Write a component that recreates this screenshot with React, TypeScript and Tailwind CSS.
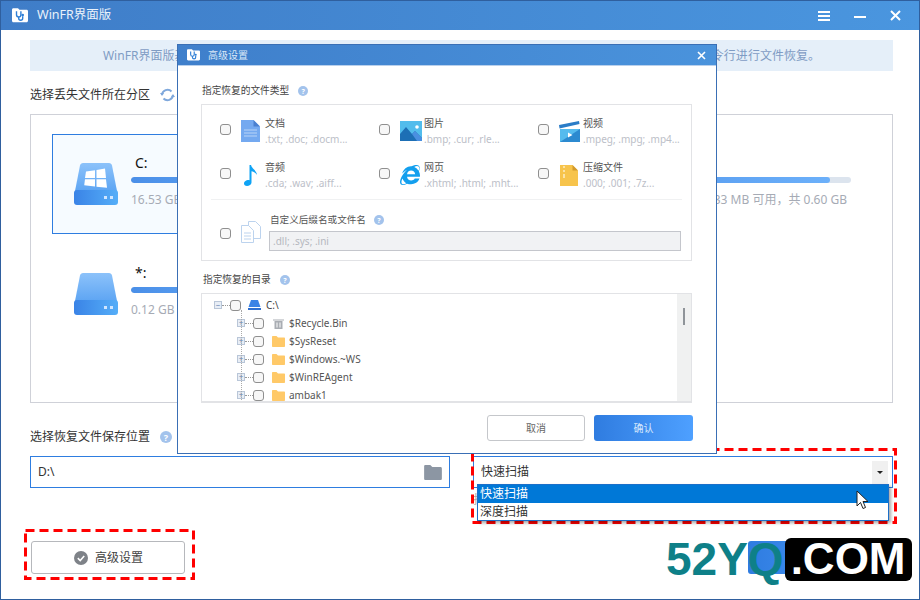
import type { ReactNode } from "react";
import { FaInternetExplorer } from "react-icons/fa";

const FONT = "font-['Noto_Sans','Noto_Sans_CJK_SC',sans-serif]";

function AppLogo({ size = 16 }: { size?: number }) {
  return (
    <svg width={size} height={size * 0.9} viewBox="0 0 16 14">
      <path d="M0 1.500C0 .7.6 0 1.400 0H6l1.500 1.500h7c.8 0 1.500.6 1.500 1.400v9.600c0 .8-.7 1.500-1.500 1.500H1.400C.6 14 0 13.300 0 12.500Z" fill="#fff" />
      <path d="M4.500 3v3.500a2.200 2.200 0 0 0 4.400 0V3M6.700 8.700v1.300a2 2 0 0 0 4 0V8" fill="none" stroke="#2f7fd6" strokeWidth="1.400" />
      <circle cx="10.700" cy="6.800" r="1.300" fill="#2f7fd6" />
    </svg>
  );
}

function Help({ size = 12 }: { size?: number }) {
  return (
    <span
      style={{ width: size, height: size, fontSize: size - 3 }}
      className="flex shrink-0 items-center justify-center rounded-full bg-[#a3c3ec] font-bold leading-none text-white"
    >
      ?
    </span>
  );
}

function Box({ className = "" }: { className?: string }) {
  return <span className={`block shrink-0 rounded-[3px] border border-[#8f8f8f] bg-[#f7f7f7] ${className}`} />;
}

function DiskIcon({ id, windows }: { id: string; windows?: boolean }) {
  return (
    <svg width="44" height="42" viewBox="0 0 44 42" className="shrink-0">
      <defs>
        <linearGradient id={`${id}a`} x1="0" y1="0" x2="0" y2="1">
          <stop offset="0" stopColor="#8cc2fa" />
          <stop offset="1" stopColor="#5ea5f3" />
        </linearGradient>
        <linearGradient id={`${id}b`} x1="0" y1="0" x2="1" y2="0">
          <stop offset="0" stopColor="#3a83e6" />
          <stop offset="1" stopColor="#55aef8" />
        </linearGradient>
      </defs>
      <path d="M6 2.500C6.300 1 7.500 0 9 0h26c1.500 0 2.700 1 3 2.500L43 28H1Z" fill={`url(#${id}a)`} />
      <rect x="0" y="27" width="44" height="15" rx="3" fill={`url(#${id}b)`} />
      <rect x="30" y="33" width="3" height="3" fill="#cfe6ff" />
      <rect x="36" y="33" width="3" height="3" fill="#cfe6ff" />
      {windows && (
        <g fill="#fff">
          <path d="M12 8.500 21 7.200V15H11Z" />
          <path d="M22.500 7 31 5.600 32 15H22.500Z" />
          <path d="M11 16.300H21V23.600L10.200 22.300Z" />
          <path d="M22.500 16.300H32L33 24.800 22.500 23.800Z" />
        </g>
      )}
    </svg>
  );
}

function DocIcon() {
  return (
    <svg width="19" height="22" viewBox="0 0 19 22">
      <path d="M0 0h12.500L19 6.500V22H0Z" fill="#74a9f0" />
      <path d="M12.500 0 19 6.500h-6.500Z" fill="#4a80d0" />
      <path d="M3 10h13M3 13h13M3 16h13" stroke="#b9d4f7" strokeWidth="1" />
    </svg>
  );
}

function ImageIcon() {
  return (
    <svg width="22" height="20" viewBox="0 0 22 20">
      <rect width="22" height="20" fill="#52bcec" />
      <path d="M0 20V13L6 6l6 7 3-3 7 7v3Z" fill="#1d6fb5" />
      <path d="M12 13l3-3 7 7v3h-5Z" fill="#4a8fe0" />
      <circle cx="17" cy="6" r="1.800" fill="#fff" />
    </svg>
  );
}

function VideoIcon() {
  return (
    <svg width="21" height="21" viewBox="0 0 21 21">
      <path d="M0 4 20 0l.5 3L.5 7.500Z" fill="#2a7cc7" />
      <path d="M1 8h20v13H1Z" fill="#2c8ad0" />
      <path d="M1 8h20L1 21Z" fill="#55bbee" />
      <path d="M9 11.500v5l4.500-2.500Z" fill="#fff" />
    </svg>
  );
}

function MusicIcon() {
  return (
    <svg width="14" height="21" viewBox="0 0 14 21" className="ml-[3px]">
      <path d="M5.500 0h1.600c.3 3.500 5.500 5 5.900 10-1.500-2.500-3.500-3.500-5.500-3.800V17.500c0 2-2.400 3.500-4.500 3.500C1 21 0 20 0 18.500c0-2 2.500-3.500 4.300-3.500.5 0 .9.100 1.200.2Z" fill="#0ea3f5" />
    </svg>
  );
}

function ZipIcon() {
  return (
    <svg width="18" height="21" viewBox="0 0 18 21" className="ml-[1px]">
      <path d="M0 0h12.500L18 5.500V21H0Z" fill="#f7c44c" />
      <path d="M12.500 0 18 5.500h-5.500Z" fill="#d29a2c" />
      <path d="M3 1h2v2H3ZM3 5h2v2H3ZM3 9h2v2H3ZM3 13h2v-2H3Z" fill="#fbe3a6" />
    </svg>
  );
}

function FilesIcon() {
  return (
    <svg width="20" height="22" viewBox="0 0 20 22" fill="#fff" stroke="#bcd3ee" strokeWidth="1">
      <path d="M7.500.500h7l5 5V17.500h-12Z" />
      <path d="M.500 4.500h7l5 5v12H.500Z" />
      <path d="M3 12h7M3 15h7M3 18h7" />
    </svg>
  );
}

function FolderIcon({ color = "#ffc968", w = 13, h = 11 }: { color?: string; w?: number; h?: number }) {
  return (
    <svg width={w} height={h} viewBox="0 0 13 11">
      <path d="M0 1c0-.6.4-1 1-1h3.500L6 1.500h6c.6 0 1 .4 1 1V10c0 .6-.4 1-1 1H1c-.6 0-1-.4-1-1Z" fill={color} />
    </svg>
  );
}

const fileTypes: { name: string; ext: string; icon: ReactNode }[] = [
  { name: "文档", ext: ".txt; .doc; .docm...", icon: <DocIcon /> },
  { name: "图片", ext: ".bmp; .cur; .rle...", icon: <ImageIcon /> },
  { name: "视频", ext: ".mpeg; .mpg; .mp4...", icon: <VideoIcon /> },
  { name: "音频", ext: ".cda; .wav; .aiff...", icon: <MusicIcon /> },
  { name: "网页", ext: ".xhtml; .html; .mht...", icon: <FaInternetExplorer size={20} color="#139fee" /> },
  { name: "压缩文件", ext: ".000; .001; .7z...", icon: <ZipIcon /> },
];

const folders = ["$SysReset", "$Windows.~WS", "$WinREAgent", "ambak1"];

function TreeRow({ icon, name }: { icon: ReactNode; name: string }) {
  return (
    <div className="flex h-[18px] items-center">
      <span className="flex h-2 w-2 shrink-0 items-center justify-center border border-[#b9c6d8] bg-[#e8eef6] text-[8px] leading-none text-[#5d7fb0]">
        +
      </span>
      <span className="w-2 border-t border-dotted border-[#999]" />
      <Box className="h-[11px] w-[11px]" />
      <span className="ml-2 flex w-[13px] justify-center">{icon}</span>
      <span className="ml-[4px] text-[10px] text-[#555]">{name}</span>
    </div>
  );
}

function Dialog() {
  return (
    <div className="absolute left-[176px] top-[43px] z-20 flex h-[410px] w-[540px] flex-col border border-[#3a6fb5] bg-white">
      <div className="flex h-[21px] shrink-0 items-center border-b border-[#b9d0ec] bg-gradient-to-r from-[#3f7fcb] to-[#4a93dc] pl-[9px] pr-[9px]">
        <AppLogo size={13} />
        <span className="ml-[8px] text-[10px] text-[#dbe8f7]">高级设置</span>
        <svg width="9" height="9" viewBox="0 0 9 9" className="ml-auto mr-[1px]">
          <path d="M1 1l7 7M8 1 1 8" stroke="#fff" strokeWidth="1.600" />
        </svg>
      </div>

      <div className="flex flex-1 flex-col pl-[23px] pr-[23px]">
        <div className="ml-[1px] mt-[17px] flex h-4 items-center gap-[9px] text-[9.7px] text-[#444]">
          指定恢复的文件类型
          <Help size={10} />
        </div>
        <div className="mt-[5px] mr-[1px] h-[157px] border border-[#e2e3e6]">
          <div className="grid h-[94px] grid-cols-[159px_159px_159px] pl-[18px] pt-[11px] auto-rows-[44px]">
            {fileTypes.map((t) => (
              <div key={t.name} className="flex h-[30px] items-center">
                <Box className="-mt-[4px] h-[11px] w-[11px]" />
                <span className="ml-[10px] flex w-[24px] shrink-0">{t.icon}</span>
                <div className="flex flex-col">
                  <span className="text-[10px] leading-[14px] text-[#555]">{t.name}</span>
                  <span className="mt-[2px] whitespace-nowrap text-[10px] leading-[14px] text-[#bcc0c8]">{t.ext}</span>
                </div>
              </div>
            ))}
          </div>
          <div className="mx-[9px] border-t border-[#f0f1f2]" />
          <div className="flex items-center pl-[18px] pt-[12px]">
            <Box className="mt-[4px] h-[11px] w-[11px]" />
            <span className="ml-[10px] flex w-[28px] shrink-0"><FilesIcon /></span>
            <div className="flex flex-col">
              <span className="ml-[1px] flex h-[16px] items-center gap-[8px] text-[9.6px] text-[#555]">
                自定义后缀名或文件名
                <Help size={10} />
              </span>
              <div className="mt-[3px] flex h-[20px] w-[412px] items-center border border-[#c4c6cc] bg-[#f1f2f4] pl-[3px] text-[10px] text-[#b5b8bf]">
                .dll; .sys; .ini
              </div>
            </div>
          </div>
        </div>

        <div className="ml-[2px] mt-[11px] flex h-4 items-center gap-[9px] text-[9.7px] text-[#444]">
          指定恢复的目录
          <Help size={10} />
        </div>
        <div className="relative mr-[1px] mt-[5px] flex h-[110px] overflow-hidden border border-b-2 border-[#e2e3e6]">
          <div className="relative flex-1 pl-[12px] pt-[2px]">
            <div className="flex h-[18px] items-center">
              <span className="flex h-2 w-2 shrink-0 items-center justify-center border border-[#b9c6d8] bg-[#e8eef6] text-[8px] leading-none text-[#5d7fb0]">
                −
              </span>
              <span className="w-[8px] border-t border-dotted border-[#999]" />
              <Box className="h-[11px] w-[11px]" />
              <svg width="13" height="10" viewBox="0 0 13 10" className="ml-[7px]">
                <path d="M3 0h7l2.500 7H.500Z" fill="#3b83e6" />
                <rect y="8" width="13" height="2" fill="#2f6fd0" />
              </svg>
              <span className="ml-[5px] text-[10px] text-[#444]">C:\</span>
            </div>
            <div className="relative pl-[23px]">
              <span className="absolute bottom-[-20px] left-[27px] top-[-4px] border-l border-dotted border-[#aaa]" />
              <TreeRow name="$Recycle.Bin" icon={
                <svg width="11" height="11" viewBox="0 0 11 11">
                  <path d="M0 1.500h11v1H0ZM1.500 3h8v8h-8Z" fill="#a9adb3" />
                  <path d="M4 4.500v5M7 4.500v5" stroke="#fff" strokeWidth="1" />
                </svg>
              } />
              {folders.map((f) => (
                <TreeRow key={f} name={f} icon={<FolderIcon />} />
              ))}
            </div>
          </div>
          <div className="flex w-[14px] shrink-0 justify-center bg-[#f0f1f1] pt-[14px]">
            <span className="h-[17px] w-[2px] bg-[#8f9499]" />
          </div>
        </div>

        <div className="mt-[12px] flex justify-end gap-[9px]">
          <button className="h-[26px] w-[98px] rounded-[3px] border border-[#c5c7cb] bg-white text-[10px] text-[#666]">取消</button>
          <button className="h-[26px] w-[99px] rounded-[3px] bg-gradient-to-r from-[#2f7ce0] to-[#4ea0ff] text-[10px] text-[#d7e8fc]">确认</button>
        </div>
      </div>
    </div>
  );
}

function Card({ letter, icon, free, fill, active, alignEnd }: { letter: string; icon: ReactNode; free: string; fill: number; active?: boolean; alignEnd?: boolean }) {
  return (
    <div className={`flex h-[100px] items-center border pl-[21px] ${active ? "border-[#2e7de0] bg-[#f6fbff]" : "border-transparent"}`}>
      {icon}
      <div className="mb-[9px] ml-[13px] flex w-[300px] flex-col">
        <span className="ml-[4px] h-[20px] text-[14px] leading-[23px] text-[#111]">{letter}</span>
        <div className="mt-[6px] h-[6px] overflow-hidden rounded-full bg-[#dce4ee]">
          <div style={{ width: `${fill}%` }} className="h-full rounded-full bg-gradient-to-r from-[#4a8fe8] to-[#6cb0fa]" />
        </div>
        <span className={`mt-[8px] text-[12px] text-[#a6abb5] ${alignEnd ? "pr-[4px] text-right" : ""}`}>{free}</span>
      </div>
    </div>
  );
}

// red dashed frame drawn over the screenshot
function Annotation({ className, w, h }: { className: string; w: number; h: number }) {
  return (
    <svg width={w} height={h} className={`absolute z-10 ${className}`}>
      <rect x="1.500" y="1.500" width={w - 3} height={h - 3} fill="none" stroke="#f00" strokeWidth="3" strokeDasharray="9 5" />
    </svg>
  );
}

export default function App() {
  return (
    <div className={`${FONT} relative h-[600px] w-[920px] overflow-hidden border border-[#2f5f9e] bg-white`}>
      <div className="flex h-[29px] items-center bg-gradient-to-r from-[#3f7dc8] to-[#4a96df] pl-[11px] pr-[18px]">
        <AppLogo />
        <span className="ml-[9px] text-[12.5px] text-[#eaf2fb]">WinFR界面版</span>
        <svg width="12" height="10" viewBox="0 0 12 10" className="ml-auto">
          <path d="M0 1h12M0 5h12M0 9h12" stroke="#fff" strokeWidth="1.800" />
        </svg>
        <span className="ml-[24px] h-[2px] w-3 translate-y-[1px] bg-white" />
        <svg width="11" height="11" viewBox="0 0 11 11" className="ml-[24px]">
          <path d="M1 1l9 9M10 1 1 10" stroke="#fff" strokeWidth="2" />
        </svg>
      </div>

      <div className="pl-[29px] pr-[26px]">
        <div className="mt-[10px] flex h-[31px] items-center justify-center whitespace-nowrap bg-[#e5eff9] text-[12px] tracking-[0.03px] text-[#7f9cc4]">
          WinFR界面版基于Windows File Recovery开发而成，提供了简洁直观的图形操作界面，您无需再手动输入复杂的命令行进行文件恢复。
        </div>

        <div className="mt-[14px] flex h-5 items-center gap-[10px] text-[12px] text-[#333]">
          选择丢失文件所在分区
          <svg width="15" height="14" viewBox="0 0 15 14" fill="none" stroke="#7fa8dc" strokeWidth="2">
            <path d="M2 7a5.500 5.500 0 0 1 9.500-3.500M13 7a5.500 5.500 0 0 1-9.500 3.500" />
            <path d="M0 5h4L2 8ZM15 9h-4l2-3Z" fill="#7fa8dc" stroke="none" />
          </svg>
        </div>

        <div className="mt-[9px] h-[289px] border border-[#cfd1d8] pl-[21px] pt-[19px]">
          <div className="grid grid-cols-[400px_400px] gap-x-5 gap-y-[10px]">
            <Card active letter="C:" free="16.53 GB 可用，共 59.45 GB" fill={72} icon={<DiskIcon id="c" windows />} />
            <Card alignEnd letter="" free="533 MB 可用，共 0.60 GB" fill={93} icon={<DiskIcon id="r" />} />
            <Card letter="*:" free="0.12 GB 可用，共 0.26 GB" fill={54} icon={<DiskIcon id="s" />} />
          </div>
        </div>

        <div className="mt-[24px] flex justify-between">
          <div className="w-[420px]">
            <div className="flex h-5 items-center gap-[10px] text-[12px] text-[#333]">
              选择恢复文件保存位置
              <Help />
            </div>
            <div className="mt-[9px] flex h-[32px] items-center justify-between border border-[#2e7de0] pl-[7px] pr-[7px] text-[12px] text-[#333]">
              D:\
              <FolderIcon color="#8c96a3" w={18} h={15} />
            </div>
          </div>
          <div className="w-[420px]">
            <div className="h-5" />
            <div className="mt-[9px] flex h-[32px] items-center justify-between border border-[#2e7de0] pl-[7px] pr-[4px] text-[12px] text-[#333]">
              快速扫描
              <span className="flex h-[23px] w-4 items-center justify-center bg-[#f0f0f0]">
                <span className="border-x-[3px] border-t-[3px] border-x-transparent border-t-[#222]" />
              </span>
            </div>
            <div className="h-0 pt-[4px] text-[12px] leading-[16px] text-[#aaa]">扫描</div>
          </div>
        </div>

        <div className="mt-[49px] flex justify-between">
          <button className="ml-[1px] flex h-[33px] w-[154px] items-center justify-center gap-[7px] rounded-[3px] border border-[#b6b8bc] pl-[1px] text-[12px] text-[#444]">
            <svg width="14" height="14" viewBox="0 0 14 14">
              <circle cx="7" cy="7" r="7" fill="#7e8288" />
              <path d="M3.800 7.200 6.200 9.500l4-4.500" fill="none" stroke="#fff" strokeWidth="1.600" />
            </svg>
            高级设置
          </button>
          <div className="mr-[1px] h-[33px] w-[144px] rounded-[3px] bg-gradient-to-r from-[#2f7ce0] to-[#4ea0ff]" />
        </div>
      </div>

      <Dialog />

      <Annotation className="left-[23px] top-[528px]" w={171} h={51} />
      <Annotation className="left-[470px] top-[447px]" w={426} h={76} />

      {/* open dropdown */}
      <div className="absolute left-[476px] top-[483px] z-30 h-[37px] w-[412px] border border-[#1b6fc9] bg-white text-[12px] leading-[17px] text-[#333] shadow-[2px_2px_3px_rgba(0,0,0,0.35)]">
        <div className="h-[18px] bg-[#0078d7] pl-[2px] text-white">快速扫描</div>
        <div className="h-[17px] pl-[2px]">深度扫描</div>
      </div>
      <svg width="13" height="21" viewBox="0 0 13 21" className="absolute left-[855px] top-[489px] z-30">
        <path d="M1 1v15l3.500-3.500 2.500 6 2.500-1-2.500-6h5Z" fill="#fff" stroke="#222" strokeWidth="1" />
      </svg>

      {/* watermark */}
      <div className="absolute left-[665px] top-[532px] z-40 flex items-center font-['Liberation_Sans',sans-serif] font-bold">
        <span className="text-[46px] leading-[52px] text-[#0e8088]">52YQ</span>
        <span className="ml-[1px] flex h-[43px] items-center rounded-[6px] bg-black px-[6px] text-[44px] leading-none text-white">.COM</span>
      </div>
    </div>
  );
}
